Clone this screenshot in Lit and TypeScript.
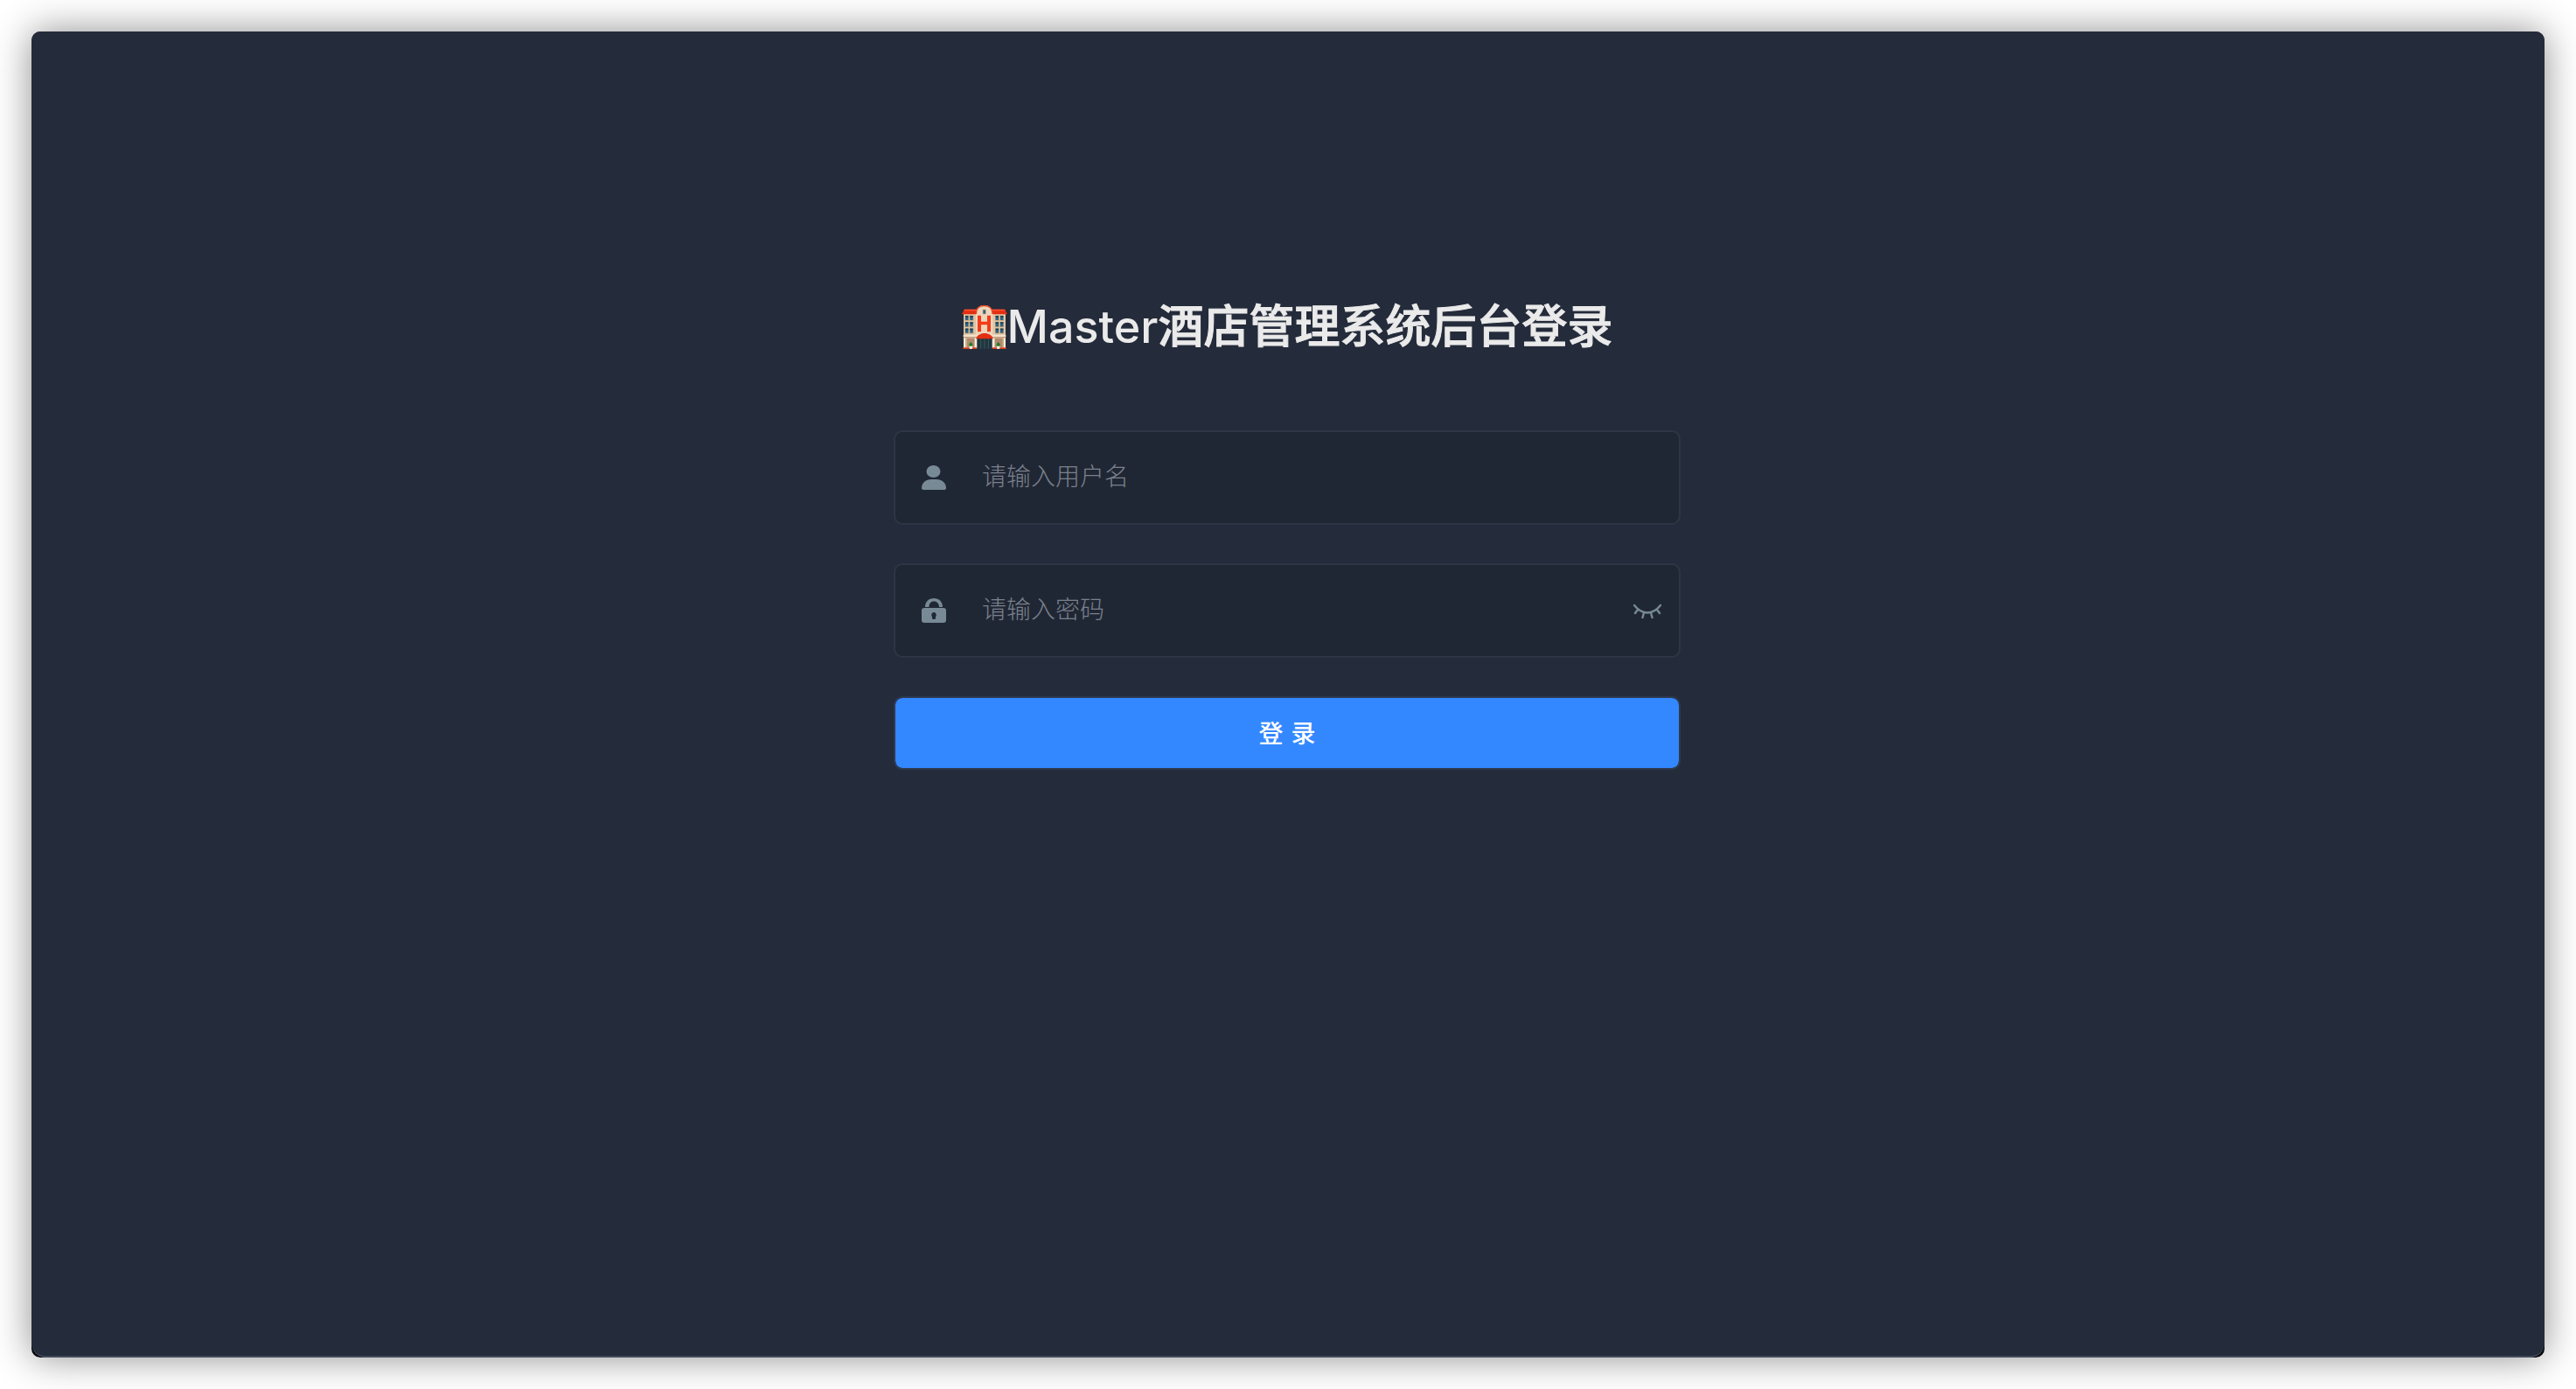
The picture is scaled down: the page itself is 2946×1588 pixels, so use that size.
import { LitElement, html, css, svg } from "lit";
import { customElement, state } from "lit/decorators.js";

const windowColumns = [44, 60, 148, 164];
const windowRows = [74, 96, 118];

@customElement("hotel-icon")
class HotelIcon extends LitElement {
  static styles = css`
    :host {
      display: block;
      width: 52px;
      height: 52px;
    }
    .art {
      display: block;
      width: 100%;
      height: 100%;
    }
  `;

  render() {
    return html`
      <svg class="art" viewBox="32 35 156 156" aria-hidden="true">
        <rect x="38" y="62" width="144" height="124" fill="#dfc5a5" />
        <path d="M41 52H179L187 66V69H33V66Z" fill="#e22f12" />
        <path d="M41 52H179L182 57H38Z" fill="#ff4f2c" />
        <path d="M80 150V66C80 48 92 38 109 38S138 48 138 66V150Z" fill="#edd6ba" />
        <path d="M81 68V66C81 50 92 39.500 109 39.500S137 50 137 66V68" fill="none" stroke="#e8401f" stroke-width="4.500" />
        <rect x="104" y="53" width="10" height="15" fill="#2b6384" stroke="#d9ae82" stroke-width="2" />
        <path d="M86 73H98V94H119V73H131V129H119V105H98V129H86Z" fill="#f43a18" />
        ${windowRows.map((y) =>
          windowColumns.map(
            (x) => svg`
              <rect x=${x - 2} y=${y - 1} width="14" height="18" fill="#c39e76" />
              <rect x=${x} y=${y} width="10" height="15" fill="#2a6487" />
              <rect x=${x} y=${y} width="10" height="5" fill="#17405a" />
            `
          )
        )}
        <rect x="37" y="139" width="146" height="8" fill="#f3e2cc" />
        <rect x="37" y="147" width="146" height="3" fill="#b07f5e" />
        <rect x="42" y="150" width="36" height="33" fill="#d0ac8a" />
        <rect x="142" y="150" width="36" height="33" fill="#d0ac8a" />
        <rect x="50" y="152" width="26" height="30" fill="#b08a6e" />
        <rect x="145" y="152" width="26" height="30" fill="#b08a6e" />
        <rect x="38" y="150" width="6" height="34" fill="#fbeedd" />
        <rect x="76" y="150" width="8" height="34" fill="#fbeedd" />
        <rect x="136" y="150" width="8" height="34" fill="#fbeedd" />
        <rect x="176" y="150" width="6" height="34" fill="#fbeedd" />
        <rect x="36" y="183" width="47" height="5" fill="#d93a1c" />
        <rect x="137" y="183" width="47" height="5" fill="#d93a1c" />
        <rect x="84" y="150" width="52" height="38" fill="#1d3645" />
        <path d="M97 153V187M110 153V187M123 153V187" stroke="#5f5f48" stroke-width="2" />
        <path d="M80 153C84 141 96 134 110 134S136 141 140 153Z" fill="#e22f12" />
        <path d="M63 163L70 177H56Z" fill="#1c7a22" />
        <path d="M157 163L164 177H150Z" fill="#1c7a22" />
        <circle cx="63" cy="173" r="6" fill="#1f7f24" />
        <circle cx="157" cy="173" r="6" fill="#1f7f24" />
        <path d="M57 178H69L67 188H59ZM151 178H163L161 188H153Z" fill="#f4efe9" />
      </svg>
    `;
  }
}

@customElement("app-root")
class AppRoot extends LitElement {
  @state() private revealed = false;

  static styles = css`
    :host {
      display: block;
      font-family: Inter, "Noto Sans CJK SC", sans-serif;
      background: #fff;
    }
    *,
    *::before,
    *::after {
      box-sizing: border-box;
    }
    .page {
      min-height: 100vh;
      padding: 36px;
      display: flex;
    }
    .frame {
      flex: 1;
      display: flex;
      background: linear-gradient(#242b3a 50%, #000 50%);
      border-radius: 10px;
      box-shadow: 0 0 44px rgba(0, 0, 0, 0.45);
    }
    .window {
      flex: 1;
      display: flex;
      flex-direction: column;
      align-items: center;
      padding: 298px 72px 72px 70px;
      background: #242b3a;
      border-radius: 10px 10px 16px 16px;
      border-bottom: 2px solid #414a5b;
    }
    .form {
      width: 100%;
      max-width: 900px;
      display: flex;
      flex-direction: column;
      gap: 44px;
    }
    .title {
      display: flex;
      justify-content: center;
      align-items: center;
      margin: 0;
      padding-bottom: 34px;
      color: #eaeaea;
      font-size: 52px;
      line-height: 80px;
      font-weight: 500;
      white-space: nowrap;
    }
    .title-name {
      -webkit-text-stroke: 1px currentColor;
    }
    .field {
      display: flex;
      align-items: center;
      height: 108px;
      padding: 0 20px 0 30px;
      background: #202734;
      border: 2px solid #2e3543;
      border-radius: 10px;
      color: #778a95;
    }
    .icon {
      display: block;
      width: 28px;
      height: 28px;
      fill: currentColor;
    }
    .input {
      flex: 1;
      min-width: 0;
      height: 94px;
      padding: 0 30px 2px 41px;
      border: 0;
      outline: 0;
      background: transparent;
      color: #fff;
      font-family: inherit;
      font-size: 28px;
      font-weight: 300;
    }
    .input::placeholder {
      color: #7a808c;
      opacity: 1;
    }
    .toggle {
      padding: 0;
      border: 0;
      background: transparent;
      color: inherit;
      cursor: pointer;
    }
    .eye {
      display: block;
      width: 32px;
      height: 20px;
      fill: none;
      stroke: currentColor;
      stroke-width: 2.4;
      stroke-linecap: round;
    }
    .submit {
      height: 84px;
      padding: 0 0 2px;
      border: 2px solid #2e3a50;
      border-radius: 10px;
      background: #3388ff;
      background-clip: padding-box;
      color: #fff;
      font-family: "DejaVu Sans", "Noto Sans CJK SC", sans-serif;
      font-size: 28px;
      font-weight: 500;
      cursor: pointer;
    }
  `;

  private toggleReveal() {
    this.revealed = !this.revealed;
  }

  private submit(event: Event) {
    event.preventDefault();
  }

  render() {
    return html`
      <main class="page">
        <div class="frame">
          <section class="window">
            <form class="form" @submit=${this.submit}>
              <h1 class="title">
                <hotel-icon></hotel-icon><span>Master<span class="title-name">酒店管理系统后台登录</span></span>
              </h1>
              <div class="field">
                <label for="username" aria-label="用户名">
                  <svg class="icon" viewBox="0 0 28 28" aria-hidden="true">
                    <ellipse cx="13.500" cy="7" rx="8" ry="7" />
                    <path d="M0 26C0 20 5 16 11 16H17C23 16 28 20 28 26Q28 28 25 28H3Q0 28 0 26Z" />
                  </svg>
                </label>
                <input class="input" id="username" type="text" placeholder="请输入用户名" />
              </div>
              <div class="field">
                <label for="password" aria-label="密码">
                  <svg class="icon" viewBox="0 0 28 28" aria-hidden="true">
                    <path d="M4 10C4 4 8 0 14 0S24 4 24 10H20C20 6 17.500 3.500 14 3.500S8.500 6 8.500 10Z" />
                    <path
                      fill-rule="evenodd"
                      d="M3 11H25Q28 11 28 14V25Q28 28 25 28H3Q0 28 0 25V14Q0 11 3 11ZM14 16A3 3 0 0 0 12 21V23Q12 24 14 24T16 23V21A3 3 0 0 0 14 16Z"
                    />
                  </svg>
                </label>
                <input
                  class="input"
                  id="password"
                  type=${this.revealed ? "text" : "password"}
                  placeholder="请输入密码"
                />
                <button class="toggle" type="button" aria-label="显示密码" @click=${this.toggleReveal}>
                  <svg class="eye" viewBox="0 0 32 20" aria-hidden="true">
                    <path
                      d="M1 4C5 9 10 12.500 16 12.500S27 9 31 4M5 9L2 13M12 12.500L10.500 18M20 12.500L21.500 18M27 9L30 13"
                    />
                  </svg>
                </button>
              </div>
              <button class="submit" type="submit">登 录</button>
            </form>
          </section>
        </div>
      </main>
    `;
  }
}
